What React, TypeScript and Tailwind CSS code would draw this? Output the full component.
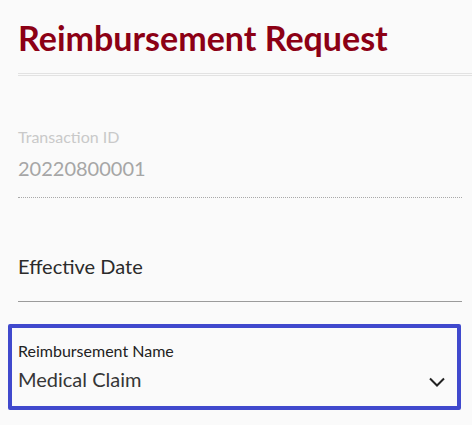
import { useState } from "react";

export default function App() {
  const [reimbursement] = useState("Medical Claim");

  return (
    <div className="min-h-screen bg-[#fafafa] font-['Lato','Noto_Sans',sans-serif]">
      <div className="pl-[18px] pt-[18px]">
        <h1 className="text-[34px] font-bold leading-[40px] text-[#8c0015]">
          Reimbursement Request
        </h1>
        <div className="mt-[15px] border-b-[3px] border-double border-[#e2e2e2]" />
      </div>

      <div className="pl-[18px] pr-[10px]">
        {/* transaction id, read only */}
        <div className="mt-[51px] border-b border-dotted border-[#a9a9a9] pb-[15px]">
          <p className="text-[16px] leading-[20px] text-[#c9c9c9]">Transaction ID</p>
          <p className="mt-[7px] text-[20px] leading-[28px] text-[#a6a6a6]">20220800001</p>
        </div>

        {/* effective date */}
        <div className="mt-[54px] border-b border-[#9b9b9b] pb-[21px]">
          <p className="text-[20px] leading-[28px] text-[#2b2b2b]">Effective Date</p>
        </div>

        {/* reimbursement name, focused select */}
        <div className="-ml-[10px] mr-[1px] mt-[22px] flex items-end rounded-[2px] border-[4px] border-[#4049cd] pb-[13px] pl-[6px] pr-[12px] pt-[13px]">
          <div className="flex-1">
            <p className="text-[16px] leading-[20px] text-[#222222]">Reimbursement Name</p>
            <p className="mt-[4px] text-[20px] leading-[28px] text-[#363636]">{reimbursement}</p>
          </div>
          <svg
            width="16"
            height="10"
            viewBox="0 0 16 10"
            fill="none"
            stroke="#222222"
            strokeWidth="2"
            className="mb-[6px]"
          >
            <path d="M1 1.5 8 8.5 15 1.5" />
          </svg>
        </div>
      </div>
    </div>
  );
}
